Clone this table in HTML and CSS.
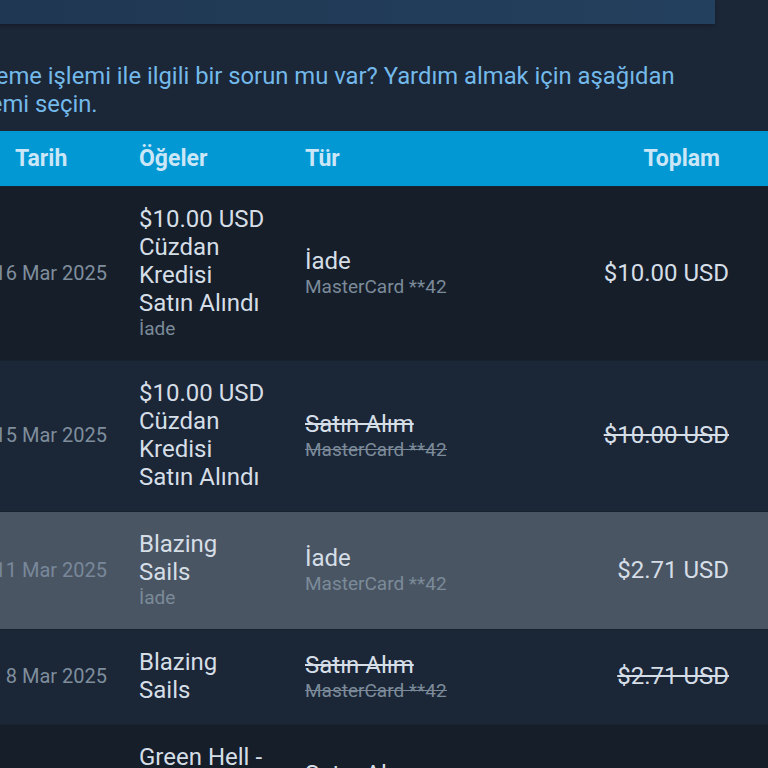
FILE: index.html
```html
<!DOCTYPE html>
<html lang="tr">
<head>
<meta charset="utf-8">
<link rel="stylesheet" href="styles.css">
</head>
<body>
<div class="page">
  <div class="topbar"></div>
  <p class="help">Ödeme işlemi ile ilgili bir sorun mu var? Yardım almak için aşağıdan işlemi seçin.</p>
  <table class="history">
    <colgroup>
      <col class="c-date"><col class="c-items"><col class="c-type"><col class="c-total">
    </colgroup>
    <thead>
      <tr>
        <th class="h-date">Tarih</th>
        <th class="h-items">Öğeler</th>
        <th class="h-type">Tür</th>
        <th class="h-total">Toplam</th>
      </tr>
    </thead>
    <tbody>
      <tr class="row dark">
        <td class="date">16 Mar 2025</td>
        <td class="items">$10.00 USD Cüzdan Kredisi Satın Alındı<div class="sub">İade</div></td>
        <td class="type">İade<div class="sub">MasterCard **42</div></td>
        <td class="total">$10.00 USD</td>
      </tr>
      <tr class="row">
        <td class="date">15 Mar 2025</td>
        <td class="items">$10.00 USD Cüzdan Kredisi Satın Alındı</td>
        <td class="type strike">Satın Alım<div class="sub">MasterCard **42</div></td>
        <td class="total strike">$10.00 USD</td>
      </tr>
      <tr class="row hover">
        <td class="date">11 Mar 2025</td>
        <td class="items">Blazing Sails<div class="sub">İade</div></td>
        <td class="type">İade<div class="sub">MasterCard **42</div></td>
        <td class="total">$2.71 USD</td>
      </tr>
      <tr class="row">
        <td class="date">8 Mar 2025</td>
        <td class="items">Blazing Sails</td>
        <td class="type strike">Satın Alım<div class="sub">MasterCard **42</div></td>
        <td class="total strike">$2.71 USD</td>
      </tr>
      <tr class="row dark">
        <td class="date">2 Mar 2025</td>
        <td class="items">Green Hell - Spirits of Amazonia</td>
        <td class="type">Satın Alım<div class="sub">MasterCard **42</div></td>
        <td class="total">$9.99 USD</td>
      </tr>
    </tbody>
  </table>
</div>
</body>
</html>
```

FILE: styles.css
```css
html, body {
  margin: 0;
  padding: 0;
  background: #1b2637;
  overflow: hidden;
  height: 768px;
}
body {
  font-family: Roboto, "Noto Sans", Arial, sans-serif;
}
.page {
  margin-left: -28px;
  width: 796px;
}
.topbar {
  height: 24px;
  width: 743px;
  background: linear-gradient(to right, #1f3651, #23405e);
  box-shadow: 0 2px 4px rgba(0,0,0,0.25);
}
.help {
  margin: 38px 0 0 -6px;
  width: 736px;
  font-size: 23.8px;
  line-height: 28px;
  color: #73b9ea;
}
.history {
  margin-top: 13px;
  width: 796px;
  border-collapse: collapse;
  table-layout: fixed;
}
.c-date { width: 153px; }
.c-items { width: 180px; }
.c-type { width: 230px; }
.c-total { width: 233px; }
thead tr {
  background: #0198d4;
}
th {
  height: 55px;
  padding: 0;
  font-size: 23px;
  font-weight: 700;
  color: #cbe6f7;
  text-align: left;
}
.h-date { padding-left: 43px; }
.h-items { padding-left: 14px; }
.h-type { padding-left: 0; }
.h-total { text-align: right; padding-right: 48px; }
.row {
  background: #1b2637;
  border-top: 1px solid #18212e;
}
.row.dark { background: #161e2a; }
.row.hover { background: #4a5563; }
td {
  padding: 18px 0 20px 0;
  vertical-align: middle;
  font-size: 24px;
  line-height: 28px;
  color: #d5dee6;
}
.date {
  font-size: 20px;
  color: #7f8e9c;
  text-align: right;
  padding-right: 18px;
}
.hover .date { color: #78889a; }
.items {
  padding-left: 14px;
  padding-right: 36px;
}
.sub {
  font-size: 19px;
  line-height: 23px;
  color: #7b8b99;
}
.total {
  text-align: right;
  padding-right: 39px;
}
.strike, .strike .sub {
  text-decoration: line-through;
}
```
